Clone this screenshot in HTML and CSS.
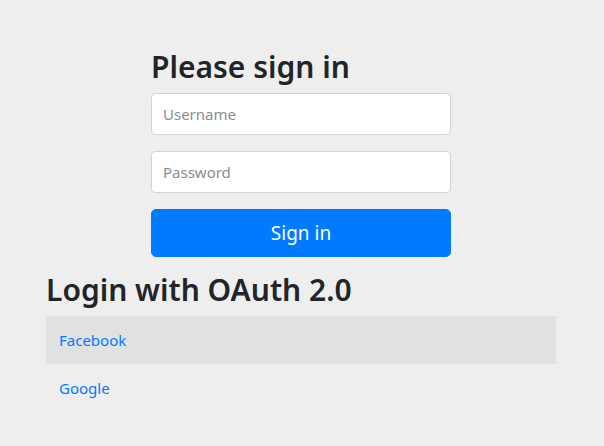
FILE: index.html
```html
<!DOCTYPE html>
<html lang="en">
<head>
    <meta charset="UTF-8">
    <meta name="viewport" content="width=device-width, initial-scale=1.0">
    <title>Please sign in</title>
    <link rel="stylesheet" href="styles.css">
</head>
<body>
    <div class="container">
        <form class="form-signin" method="post" action="/login">
            <h2 class="form-signin-heading">Please sign in</h2>
            <p>
                <input type="text" id="username" name="username" class="form-control" placeholder="Username">
            </p>
            <p>
                <input type="password" id="password" name="password" class="form-control" placeholder="Password">
            </p>
            <button class="btn-primary" type="submit">Sign in</button>
        </form>

        <h2 class="oauth-heading">Login with OAuth 2.0</h2>
        <table class="table-striped">
            <tr><td><a href="#">Facebook</a></td></tr>
            <tr><td><a href="#">Google</a></td></tr>
        </table>
    </div>
</body>
</html>
```

FILE: styles.css
```css
* {
    box-sizing: border-box;
}

body {
    font-family: "Noto Sans", "Open Sans", sans-serif;
    font-size: 15px;
    line-height: 1.5;
    color: #212529;
    background-color: #eee;
    margin: 0;
    padding-top: 39px;
    padding-bottom: 40px;
}

.container {
    max-width: 540px;
    margin: 0 auto;
    padding: 0 16px 0 14px;
}

.form-signin {
    max-width: 330px;
    margin: 0 auto;
    padding: 10px 15px 0;
}

h2 {
    font-size: 30px;
    font-weight: 600;
    line-height: 1.2;
    margin: 0 0 8px;
}

.form-signin p {
    margin: 0 0 16px;
}

.form-control {
    display: block;
    width: 100%;
    height: 42px;
    padding: 6px 11px;
    font: inherit;
    font-size: 15px;
    color: #495057;
    background-color: #fff;
    border: 1px solid #ced4da;
    border-radius: 4px;
}

.form-control::placeholder {
    color: #868e96;
}

.btn-primary {
    display: block;
    width: 100%;
    height: 48px;
    padding: 8px 16px;
    font: inherit;
    font-size: 19px;
    color: #fff;
    background-color: #007bff;
    border: 1px solid #007bff;
    border-radius: 5px;
    cursor: pointer;
}

.oauth-heading {
    margin-top: 15px;
}

.table-striped {
    width: 100%;
    border-collapse: collapse;
}

.table-striped td {
    padding: 12px 13px;
    height: 48px;
}

.table-striped tr:nth-child(odd) {
    background-color: rgba(0, 0, 0, 0.05);
}

a {
    color: #007bff;
    text-decoration: none;
}
```
